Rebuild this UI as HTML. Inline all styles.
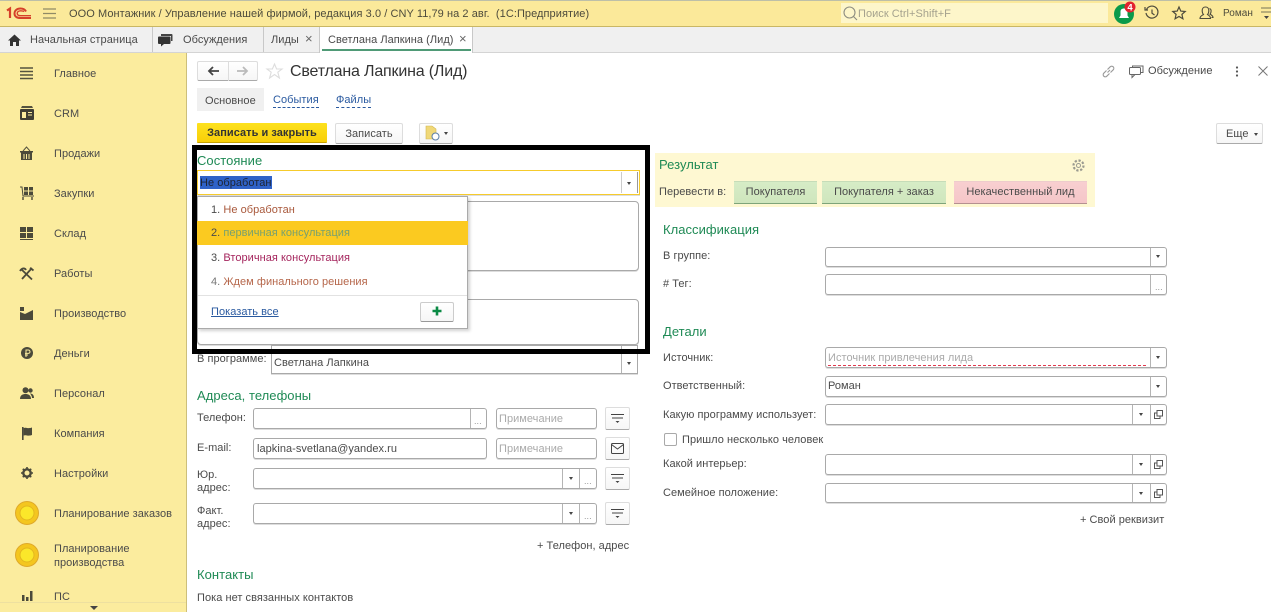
<!DOCTYPE html>
<html lang="ru"><head><meta charset="utf-8"><title>Светлана Лапкина (Лид)</title>
<style>
html,body{margin:0;padding:0;width:1271px;height:612px;overflow:hidden;background:#fff;font-family:"Liberation Sans","Noto Sans CJK SC",sans-serif;font-size:11px;color:#4a4a4a;letter-spacing:.04px}
.a{position:absolute}
.t{position:absolute;white-space:nowrap;line-height:14px;margin-top:1px}
.g{color:#1f8a55;font-size:13px;line-height:16px}
.f{position:absolute;box-sizing:border-box;background:#fff;border:1px solid #a9a9a9;border-radius:3px;box-shadow:0 1px 0 #ddd}
.s{position:absolute;top:0;bottom:0;width:1px;background:#b4b4b4}
.ar{position:absolute;width:0;height:0;border-left:2.5px solid transparent;border-right:2.5px solid transparent;border-top:3px solid #444}
.dots{position:absolute;font-size:9px;color:#999;line-height:10px}
.b{position:absolute;box-sizing:border-box;background:linear-gradient(#fff,#f6f6f6);border:1px solid #ddd;border-bottom:1px solid #aaa;border-radius:2px;text-align:center}
.ph{color:#aaa}
.lnk{color:#2a5aa0;border-bottom:1px dashed #2a5aa0;line-height:13px}
svg{position:absolute;overflow:visible}
.m{left:54px}
.gb{position:absolute;box-sizing:border-box;top:181px;height:23px;border-top:1px solid #c6dcb8;border-bottom:1px solid #7ea47a;text-align:center;line-height:21px;white-space:nowrap}
</style></head><body>

<!-- top bar -->
<div class="a" style="left:0;top:0;width:1271px;height:27px;background:#fbe99a;border-top:1px solid #bdbfa8;border-bottom:1px solid #c9b765;box-sizing:border-box"></div>
<svg style="left:6px;top:7px" width="26" height="14" viewBox="0 0 26 14"><path d="M1 3.5L4 1.5V11" fill="none" stroke="#d6402a" stroke-width="2.2"/><path d="M20 4.5C19 2.5 17 1.5 14.5 1.5C11 1.5 8.5 3.5 8.5 6.5C8.5 9.5 11 11 14.5 11H25" fill="none" stroke="#d6402a" stroke-width="2"/><path d="M18 4.5C17 4 16 3.8 14.8 3.8C12.6 3.8 11.2 5 11.2 6.4C11.2 8 12.6 8.7 14.8 8.7H25" fill="none" stroke="#d6402a" stroke-width="1.4"/></svg>
<svg style="left:43px;top:8px" width="13" height="11"><path d="M0 1H13M0 5.5H13M0 10H13" stroke="#8f8a66" stroke-width="1.2"/></svg>
<div class="t" style="left:69px;top:6px;color:#4d4b3c;letter-spacing:.065px">ООО Монтажник / Управление нашей фирмой, редакция 3.0 / CNY 11,79 на 2 авг.&nbsp; (1С:Предприятие)</div>
<div class="a" style="left:841px;top:3px;width:267px;height:20px;background:#fdf6ca"></div>
<svg style="left:843px;top:6px" width="15" height="15" fill="none" stroke="#8d8d80" stroke-width="1.1"><circle cx="6.5" cy="6.5" r="5.5"/><path d="M10.5 10.5L14 14"/></svg>
<div class="t ph" style="left:858px;top:6px;color:#a5a28e">Поиск Ctrl+Shift+F</div>
<svg style="left:1114px;top:1px" width="24" height="24"><circle cx="10" cy="13" r="10" fill="#0b9a4a"/><path d="M5 17H15L13.5 14.5V10.5C13.5 8.5 12 7.5 10 7.5C8 7.5 6.5 8.5 6.5 10.5V14.5Z" fill="#fff"/><circle cx="16" cy="6" r="5.5" fill="#e2232e"/><text x="16" y="9.5" font-size="9.5" font-weight="bold" fill="#fff" text-anchor="middle" font-family="Liberation Sans">4</text></svg>
<svg style="left:1145px;top:6px" width="14" height="14" fill="none" stroke="#4d4b3c" stroke-width="1.2"><path d="M1.5 3.5A6 6 0 1 1 1 7"/><path d="M0 1V4H3"/><path d="M7 3.5V7.2L9.5 9"/></svg>
<svg style="left:1172px;top:6px" width="14" height="14" fill="none" stroke="#4d4b3c" stroke-width="1.2"><path d="M7 1L8.8 5.1L13.2 5.5L9.9 8.4L10.9 12.8L7 10.5L3.1 12.8L4.1 8.4L.8 5.5L5.2 5.1Z"/></svg>
<svg style="left:1199px;top:6px" width="15" height="14" fill="none" stroke="#4d4b3c" stroke-width="1.1"><path d="M1 12.5C1 10 3 9.5 4.5 8.5C3.5 7.5 3.2 6 3.2 4.5C3.2 2.5 4.5 1 6.5 1C8.5 1 9.8 2.5 9.8 4.5C9.8 6 9.5 7.5 8.5 8.5C10 9.5 11.5 10 11.5 12.5Z"/><path d="M10.5 2.5C12 3 12.3 4.5 12 6C11.8 7 11.5 7.6 11 8.2C12.5 9 14 9.5 14 11.5H12.5"/></svg>
<div class="t" style="left:1223px;top:6px;font-size:10px;color:#4d4b3c">Роман</div>
<svg style="left:1261px;top:7px" width="10" height="14"><path d="M0 1H10M0 5H10" stroke="#8f8a66" stroke-width="1.2"/><path d="M3 9H8L5.5 12Z" fill="#444"/></svg>

<!-- tab bar -->
<div class="a" style="left:0;top:27px;width:1271px;height:26px;background:#f0f0f0;border-bottom:1px solid #d4d4d4;box-sizing:border-box"></div>
<svg style="left:8px;top:34px" width="13" height="12"><path d="M6.5 .5L13 6.5H11V12H8V8H5V12H2V6.5H0Z" fill="#333"/></svg>
<div class="t" style="left:30px;top:32px;letter-spacing:.08px">Начальная страница</div>
<div class="a" style="left:152px;top:27px;width:1px;height:25px;background:#c8c8c8"></div>
<svg style="left:158px;top:33px" width="15" height="14"><path d="M3 1H13.5Q14.5 1 14.5 2V8H13V3H3Z" fill="#444"/><path d="M1 3.5H11.5Q12.5 3.5 12.5 4.5V10Q12.5 11 11.5 11H6L3 13.5V11H1Q0 11 0 10V4.5Q0 3.5 1 3.5Z" fill="#333"/></svg>
<div class="t" style="left:183px;top:32px">Обсуждения</div>
<div class="a" style="left:263px;top:27px;width:1px;height:25px;background:#c8c8c8"></div>
<div class="t" style="left:271px;top:32px">Лиды</div>
<div class="t" style="left:305px;top:31px;font-size:13px;color:#666">×</div>
<div class="a" style="left:319px;top:27px;width:154px;height:26px;box-sizing:border-box;background:#fff;border-left:1px solid #c8c8c8;border-right:1px solid #c8c8c8"></div>
<div class="t" style="left:328px;top:32px">Светлана Лапкина (Лид)</div>
<div class="t" style="left:459px;top:31px;font-size:13px;color:#666">×</div>
<div class="a" style="left:322px;top:49px;width:149px;height:2px;background:#4f9a76"></div>

<!-- sidebar -->
<div class="a" style="left:0;top:53px;width:187px;height:559px;background:#fbec9e;border-right:1px solid #cdbf7a;box-sizing:border-box"></div>
<svg style="left:20px;top:67px" width="13" height="13"><path d="M0 1H13M0 4.5H13M0 8H13M0 11.5H13" stroke="#55533f" stroke-width="1.5"/></svg>
<div class="t m" style="top:66px">Главное</div>
<svg style="left:20px;top:106px" width="14" height="14"><path d="M2 0H12L13 2H1Z" fill="#55533f"/><rect y="3" width="14" height="11" rx="1" fill="#3f3e33"/><rect x="2" y="6" width="4" height="6" fill="#fbec9e"/><path d="M8 6.5H12M8 9H12" stroke="#fbec9e"/></svg>
<div class="t m" style="top:106px">CRM</div>
<svg style="left:20px;top:147px" width="13" height="13"><path d="M3 4L6.5 0L10 4" fill="none" stroke="#55533f"/><path d="M0 4H13V5.5H12V13H1V5.5H0Z" fill="#4b4a3a"/><path d="M4 7V12M6.5 7V12M9 7V12" stroke="#fbec9e"/></svg>
<div class="t m" style="top:146px">Продажи</div>
<svg style="left:20px;top:187px" width="14" height="13"><path d="M0 0H2L3 9H14" fill="none" stroke="#4b4a3a"/><rect x="4" y="0" width="4" height="3.5" fill="#4b4a3a"/><rect x="9" y="0" width="4" height="3.5" fill="#4b4a3a"/><rect x="4" y="4.5" width="4" height="3.5" fill="#4b4a3a"/><rect x="9" y="4.5" width="4" height="3.5" fill="#4b4a3a"/><path d="M3 10V13M12 10V13" stroke="#4b4a3a" stroke-width="1.4"/></svg>
<div class="t m" style="top:186px">Закупки</div>
<svg style="left:20px;top:227px" width="13" height="13" fill="#4b4a3a"><rect width="6" height="5"/><rect x="7" width="6" height="5"/><rect y="6" width="6" height="5"/><rect x="7" y="6" width="6" height="5"/><rect y="12" width="13" height="1"/></svg>
<div class="t m" style="top:226px">Склад</div>
<svg style="left:20px;top:267px" width="14" height="13" fill="none" stroke="#4b4a3a" stroke-width="1.8"><path d="M1 2L12 12.5"/><path d="M12 1L2 12"/><path d="M0 4C2 .5 5 1 6 3"/><path d="M10 .8L13.5 3.5"/></svg>
<div class="t m" style="top:266px">Работы</div>
<svg style="left:20px;top:307px" width="13" height="13" fill="#4b4a3a"><rect x="0" y="0" width="4" height="4"/><path d="M0 5L5 7L9 5L13 3V13H0Z"/></svg>
<div class="t m" style="top:306px">Производство</div>
<svg style="left:21px;top:347px" width="12" height="12"><circle cx="6" cy="6" r="6" fill="#4b4a3a"/><path d="M5 10V3H7.3A1.6 1.6 0 0 1 7.3 6.4H4M4 8H7" fill="none" stroke="#fbec9e" stroke-width="1"/></svg>
<div class="t m" style="top:346px">Деньги</div>
<svg style="left:20px;top:387px" width="14" height="12" fill="#4b4a3a"><circle cx="5.5" cy="3.2" r="3"/><path d="M0 12C0 8 3 7 5.5 7C8 7 11 8 11 12Z"/><circle cx="10.5" cy="3.5" r="2.2"/><path d="M10 6.5C12 6.5 14 7.5 14 11H12C12 9 11 8 10 6.5Z"/></svg>
<div class="t m" style="top:386px">Персонал</div>
<svg style="left:22px;top:427px" width="10" height="13" fill="#4b4a3a"><rect width="1.6" height="13"/><path d="M1.6 1C4 0 6 2 10 .5V8C6 9.5 4 7.5 1.6 8.5Z"/></svg>
<div class="t m" style="top:426px">Компания</div>
<svg style="left:21px;top:467px" width="12" height="12"><circle cx="6" cy="6" r="3.7" fill="none" stroke="#4b4a3a" stroke-width="2.4"/><path d="M6 0V12M0 6H12M1.8 1.8L10.2 10.2M10.2 1.8L1.8 10.2" stroke="#4b4a3a" stroke-width="1.6" stroke-dasharray="2 8"/></svg>
<div class="t m" style="top:466px">Настройки</div>
<svg style="left:15px;top:501px" width="24" height="24"><circle cx="12" cy="12" r="11.5" fill="#f4c61f" stroke="#dfa92a"/><circle cx="12" cy="12" r="7" fill="#fbe72a" stroke="#e3b71f"/></svg>
<div class="t m" style="top:506px">Планирование заказов</div>
<svg style="left:15px;top:543px" width="24" height="24"><circle cx="12" cy="12" r="11.5" fill="#f4c61f" stroke="#dfa92a"/><circle cx="12" cy="12" r="7" fill="#fbe72a" stroke="#e3b71f"/></svg>
<div class="t m" style="top:541px">Планирование</div>
<div class="t m" style="top:555px">производства</div>
<svg style="left:22px;top:591px" width="11" height="10" fill="#4b4a3a"><rect y="4" width="2.5" height="6"/><rect x="4" y="6" width="2.5" height="4"/><rect x="8" width="2.5" height="10"/></svg>
<div class="t m" style="top:589px">ПС</div>
<div class="a" style="left:0;top:602px;width:186px;height:10px;background:#fbec9e;border-top:1px solid #ede0a0;box-sizing:border-box"></div>
<div class="ar" style="left:90px;top:606px;border-left-width:4px;border-right-width:4px;border-top-width:4px"></div>

<!-- header of form -->
<div class="b" style="left:197px;top:61px;width:61px;height:20px"></div>
<div class="a" style="left:228px;top:61px;width:1px;height:20px;background:#ddd"></div>
<svg style="left:207px;top:66px" width="12" height="10"><path d="M12 5H2M6 1L2 5L6 9" fill="none" stroke="#444" stroke-width="1.8"/></svg>
<svg style="left:237px;top:66px" width="12" height="10"><path d="M0 5H10M6 1L10 5L6 9" fill="none" stroke="#bbb" stroke-width="1.8"/></svg>
<svg style="left:266px;top:63px" width="17" height="16" fill="none" stroke="#ddd" stroke-width="1.1"><path d="M8.5 1L10.6 6H16L11.8 9.2L13.4 15L8.5 11.6L3.6 15L5.2 9.2L1 6H6.4Z"/></svg>
<div class="t" style="left:290px;top:62px;font-size:16px;line-height:18px;color:#333;letter-spacing:-.18px">Светлана Лапкина (Лид)</div>
<svg style="left:1102px;top:65px" width="13" height="13" fill="none" stroke="#999" stroke-width="1.1"><path d="M5.5 7.5L8 5"/><path d="M4.5 5.5L1.8 8.2A2 2 0 0 0 4.8 11.2L7.5 8.5"/><path d="M5.5 4.5L8.2 1.8A2 2 0 0 1 11.2 4.8L8.5 7.5"/></svg>
<svg style="left:1129px;top:65px" width="15" height="13" fill="none" stroke="#666" stroke-width="1"><path d="M3.5 2.5V1H14V7.5H12"/><rect x=".5" y="2.5" width="11" height="7" rx="1"/><path d="M3 9.5V12.5L6 9.5"/></svg>
<div class="t" style="left:1148px;top:63px">Обсуждение</div>
<svg style="left:1235px;top:66px" width="4" height="11" fill="#555"><circle cx="2" cy="1.5" r="1.1"/><circle cx="2" cy="5.5" r="1.1"/><circle cx="2" cy="9.5" r="1.1"/></svg>
<svg style="left:1258px;top:66px" width="10" height="10"><path d="M.5 .5L9.5 9.5M9.5 .5L.5 9.5" stroke="#777"/></svg>

<div class="a" style="left:197px;top:88px;width:67px;height:23px;background:#f0f0f0"></div>
<div class="t" style="left:205px;top:93px">Основное</div>
<div class="t lnk" style="left:273px;top:93px">События</div>
<div class="t lnk" style="left:336px;top:93px">Файлы</div>

<div class="a" style="left:197px;top:123px;width:130px;height:20px;background:linear-gradient(#fde21e,#f8cf08);border-bottom:1px solid #c6a100;box-sizing:border-box;border-radius:1px;text-align:center;font-weight:bold;line-height:21px;color:#333">Записать и закрыть</div>
<div class="b" style="left:335px;top:123px;width:68px;height:21px;line-height:20px">Записать</div>
<div class="b" style="left:419px;top:123px;width:34px;height:21px"></div>
<svg style="left:426px;top:126px" width="15" height="15"><path d="M0 0H6L10 3V13H0Z" fill="#f0d878" stroke="#d2b650" stroke-width=".6"/><circle cx="9.5" cy="10.5" r="3.5" fill="#fff" stroke="#5b7fa8"/></svg>
<div class="ar" style="left:444px;top:132px"></div>
<div class="b" style="left:1216px;top:123px;width:47px;height:21px;text-align:left;padding-left:9px;line-height:20px">Еще</div>
<div class="ar" style="left:1254px;top:133px"></div>

<!-- left form -->
<div class="t g" style="left:197px;top:152px">Состояние</div>
<div class="f" style="left:197px;top:170px;width:443px;height:25px;border-color:#f6cb2c;border-radius:0"></div>
<div class="a" style="left:621px;top:172px;width:1px;height:21px;background:#ccc"></div>
<div class="a" style="left:637px;top:172px;width:1px;height:21px;background:#999"></div>
<div class="ar" style="left:627px;top:182px"></div>
<div class="a" style="left:200px;top:176px;width:72px;height:13px;background:#2f62c8"></div>
<div class="t" style="left:200px;top:175px;color:#1d2433">Не обработан</div>

<div class="f" style="left:197px;top:201px;width:442px;height:70px;border-radius:4px"></div>
<div class="f" style="left:197px;top:299px;width:442px;height:46px;border-radius:4px"></div>

<div class="t" style="left:197px;top:351px">В программе:</div>
<div class="f" style="left:271px;top:345px;width:367px;height:29px;border-radius:0"><div class="s" style="left:349px"></div><div class="ar" style="left:355px;top:16px"></div></div>
<div class="t" style="left:274px;top:355px">Светлана Лапкина</div>

<!-- dropdown -->
<div class="a" style="left:197px;top:196px;width:271px;height:133px;box-sizing:border-box;background:#fff;border:1px solid #aaa;box-shadow:2px 2px 3px rgba(0,0,0,.18)"></div>
<div class="a" style="left:197px;top:221px;width:271px;height:24px;background:#fbca20"></div>
<div class="t" style="left:211px;top:202px">1. <span style="color:#a9593c">Не обработан</span></div>
<div class="t" style="left:211px;top:225px">2. <span style="color:#76a070">первичная консультация</span></div>
<div class="t" style="left:211px;top:250px">3. <span style="color:#a5265e">Вторичная консультация</span></div>
<div class="t" style="left:211px;top:274px;color:#777">4. <span style="color:#b5664a">Ждем финального решения</span></div>
<div class="a" style="left:198px;top:295px;width:269px;height:1px;background:#e2e2e2"></div>
<div class="t" style="left:211px;top:304px;color:#2a5aa0;text-decoration:underline">Показать все</div>
<div class="b" style="left:420px;top:302px;width:34px;height:20px;border-color:#ccc;border-bottom-color:#999"></div>
<svg style="left:432px;top:306px" width="10" height="10"><path d="M5 .5V9.5M.5 5H9.5" stroke="#0b8a45" stroke-width="2.6"/></svg>

<!-- black frame -->
<div class="a" style="left:192px;top:145px;width:458px;height:209px;box-sizing:border-box;border:5px solid #000"></div>

<!-- addresses -->
<div class="t g" style="left:197px;top:387px">Адреса, телефоны</div>
<div class="t" style="left:197px;top:410px">Телефон:</div>
<div class="f" style="left:253px;top:408px;width:234px;height:21px"><div class="s" style="left:216px"></div><div class="dots" style="left:220px;top:7px">...</div></div>
<div class="f" style="left:496px;top:408px;width:101px;height:21px"></div>
<div class="t ph" style="left:499px;top:411px">Примечание</div>
<div class="b" style="left:605px;top:407px;width:25px;height:23px"></div>
<svg style="left:611px;top:414px" width="13" height="10"><path d="M0 .5H13M1 4H12" stroke="#444"/><path d="M4.5 7H8.5L6.5 9Z" fill="#444"/></svg>

<div class="t" style="left:197px;top:440px">E-mail:</div>
<div class="f" style="left:253px;top:438px;width:234px;height:21px"></div>
<div class="t" style="left:257px;top:441px">lapkina-svetlana@yandex.ru</div>
<div class="f" style="left:496px;top:438px;width:101px;height:21px"></div>
<div class="t ph" style="left:499px;top:441px">Примечание</div>
<div class="b" style="left:605px;top:437px;width:25px;height:23px"></div>
<svg style="left:611px;top:443px" width="13" height="11" fill="none" stroke="#444"><rect x=".5" y=".5" width="12" height="10" rx="1"/><path d="M.5 1.5L6.5 6L12.5 1.5"/></svg>

<div class="t" style="left:197px;top:467px">Юр.</div>
<div class="t" style="left:197px;top:480px">адрес:</div>
<div class="f" style="left:253px;top:468px;width:344px;height:21px"><div class="s" style="left:308px"></div><div class="ar" style="left:315px;top:8px"></div><div class="s" style="left:325px"></div><div class="dots" style="left:330px;top:7px">...</div></div>
<div class="b" style="left:605px;top:467px;width:25px;height:23px"></div>
<svg style="left:611px;top:474px" width="13" height="10"><path d="M0 .5H13M1 4H12" stroke="#444"/><path d="M4.5 7H8.5L6.5 9Z" fill="#444"/></svg>

<div class="t" style="left:197px;top:503px">Факт.</div>
<div class="t" style="left:197px;top:516px">адрес:</div>
<div class="f" style="left:253px;top:503px;width:344px;height:21px"><div class="s" style="left:308px"></div><div class="ar" style="left:315px;top:8px"></div><div class="s" style="left:325px"></div><div class="dots" style="left:330px;top:7px">...</div></div>
<div class="b" style="left:605px;top:502px;width:25px;height:23px"></div>
<svg style="left:611px;top:509px" width="13" height="10"><path d="M0 .5H13M1 4H12" stroke="#444"/><path d="M4.5 7H8.5L6.5 9Z" fill="#444"/></svg>

<div class="t" style="left:537px;top:538px">+ Телефон, адрес</div>
<div class="t g" style="left:197px;top:566px">Контакты</div>
<div class="t" style="left:197px;top:590px">Пока нет связанных контактов</div>

<!-- result panel -->
<div class="a" style="left:655px;top:153px;width:440px;height:54px;background:#fef8d2"></div>
<div class="t g" style="left:659px;top:156px">Результат</div>
<svg style="left:1072px;top:159px" width="13" height="13" fill="none" stroke="#9a9a90"><circle cx="6.5" cy="6.5" r="5" stroke-width="2.2" stroke-dasharray="2.2 1.7"/><circle cx="6.5" cy="6.5" r="2"/></svg>
<div class="t" style="left:659px;top:184px">Перевести в:</div>
<div class="gb" style="left:734px;width:83px;background:linear-gradient(#d6ecc6,#cfe6bd)">Покупателя</div>
<div class="gb" style="left:822px;width:124px;background:linear-gradient(#d6ecc6,#cfe6bd)">Покупателя + заказ</div>
<div class="gb" style="left:954px;width:133px;background:linear-gradient(#f8cfd0,#f5c6c8);border-top-color:#ecc;border-bottom-color:#b49090">Некачественный лид</div>

<!-- classification -->
<div class="t g" style="left:663px;top:221px">Классификация</div>
<div class="t" style="left:663px;top:248px">В группе:</div>
<div class="f" style="left:825px;top:247px;width:342px;height:20px"><div class="s" style="left:324px"></div><div class="ar" style="left:330px;top:7px"></div></div>
<div class="t" style="left:663px;top:276px"># Тег:</div>
<div class="f" style="left:825px;top:274px;width:342px;height:21px"><div class="s" style="left:324px"></div><div class="dots" style="left:329px;top:7px">...</div></div>

<!-- details -->
<div class="t g" style="left:663px;top:323px">Детали</div>
<div class="t" style="left:663px;top:350px">Источник:</div>
<div class="f" style="left:825px;top:347px;width:342px;height:21px"><div class="s" style="left:324px"></div><div class="ar" style="left:330px;top:8px"></div></div>
<div class="t ph" style="left:828px;top:350px">Источник привлечения лида</div>
<div class="a" style="left:828px;top:365px;width:318px;height:0;border-top:1px dashed #e0394f"></div>

<div class="t" style="left:663px;top:378px">Ответственный:</div>
<div class="f" style="left:825px;top:376px;width:342px;height:21px"><div class="s" style="left:324px"></div><div class="ar" style="left:330px;top:8px"></div></div>
<div class="t" style="left:828px;top:378px">Роман</div>

<div class="t" style="left:663px;top:407px">Какую программу использует:</div>
<div class="f" style="left:825px;top:404px;width:342px;height:21px"><div class="s" style="left:306px"></div><div class="ar" style="left:313px;top:8px"></div><div class="s" style="left:324px"></div></div>
<svg style="left:1154px;top:410px" width="9" height="9" fill="none" stroke="#555"><rect x="3" y=".5" width="5.5" height="5.5"/><path d="M3 3H.5V8.5H6V6"/></svg>

<div class="a" style="left:664px;top:433px;width:13px;height:13px;box-sizing:border-box;border:1px solid #a9a9a9;border-radius:2px;background:#fff"></div>
<div class="t" style="left:682px;top:432px">Пришло несколько человек</div>

<div class="t" style="left:663px;top:456px">Какой интерьер:</div>
<div class="f" style="left:825px;top:454px;width:342px;height:21px"><div class="s" style="left:306px"></div><div class="ar" style="left:313px;top:8px"></div><div class="s" style="left:324px"></div></div>
<svg style="left:1154px;top:460px" width="9" height="9" fill="none" stroke="#555"><rect x="3" y=".5" width="5.5" height="5.5"/><path d="M3 3H.5V8.5H6V6"/></svg>

<div class="t" style="left:663px;top:485px">Семейное положение:</div>
<div class="f" style="left:825px;top:483px;width:342px;height:20px"><div class="s" style="left:306px"></div><div class="ar" style="left:313px;top:8px"></div><div class="s" style="left:324px"></div></div>
<svg style="left:1154px;top:489px" width="9" height="9" fill="none" stroke="#555"><rect x="3" y=".5" width="5.5" height="5.5"/><path d="M3 3H.5V8.5H6V6"/></svg>

<div class="t" style="left:1080px;top:512px">+ Свой реквизит</div>
</body></html>
